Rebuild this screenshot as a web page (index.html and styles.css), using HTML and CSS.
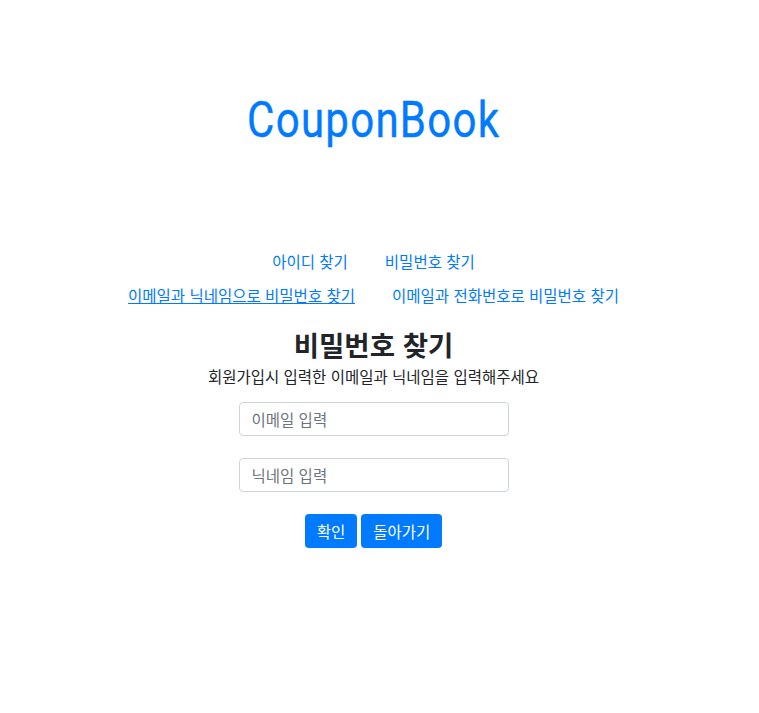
FILE: index.html
```html
<!DOCTYPE html>
<html lang="ko">
<head>
<meta charset="utf-8">
<title>CouponBook</title>
<link rel="stylesheet" href="styles.css">
</head>
<body>
<div class="page">
  <header class="brand">
    <h1 class="logo">CouponBook</h1>
  </header>
  <nav class="tabs">
    <a class="tab" href="#">아이디 찾기</a>
    <a class="tab" href="#">비밀번호 찾기</a>
  </nav>
  <nav class="tabs sub">
    <a class="tab active" href="#">이메일과 닉네임으로 비밀번호 찾기</a>
    <a class="tab" href="#">이메일과 전화번호로 비밀번호 찾기</a>
  </nav>
  <section class="form-area">
    <h2 class="title">비밀번호 찾기</h2>
    <p class="desc">회원가입시 입력한 이메일과 닉네임을 입력해주세요</p>
    <form class="form">
      <input class="field" type="text" placeholder="이메일 입력">
      <input class="field" type="text" placeholder="닉네임 입력">
      <div class="actions">
        <button class="btn" type="button">확인</button>
        <button class="btn" type="button">돌아가기</button>
      </div>
    </form>
  </section>
</div>
</body>
</html>
```
FILE: styles.css
```css
* { box-sizing: border-box; }
body {
  margin: 0;
  background: #fff;
  color: #212529;
  font-family: "Noto Sans CJK KR", "Noto Sans", sans-serif;
  font-size: 15.5px;
}
.page {
  display: flex;
  flex-direction: column;
  align-items: center;
  padding-right: 12px;
}
.brand {
  padding-top: 88px;
  height: 244px;
}
.logo {
  margin: 0;
  font-family: "Roboto", sans-serif;
  font-weight: 400;
  font-size: 50px;
  color: #007bff;
  line-height: 64px;
  letter-spacing: 1.5px;
  -webkit-text-stroke: 0.4px #007bff;
  transform: scaleX(0.84);
}
.tabs {
  display: flex;
  gap: 37px;
  height: 34px;
  align-items: center;
}
.tab {
  color: #007bff;
  text-decoration: none;
  font-size: 15.5px;
}
.tab.active { text-decoration: underline; }
.form-area {
  display: flex;
  flex-direction: column;
  align-items: center;
}
.title {
  margin: 14px 0 0;
  font-size: 27.5px;
  font-weight: 700;
  line-height: 36px;
}
.desc {
  margin: 2px 0 0;
  line-height: 24px;
}
.form {
  display: flex;
  flex-direction: column;
  align-items: center;
  gap: 22px;
  margin-top: 14px;
}
.field {
  width: 270px;
  height: 34px;
  padding: 4px 12px;
  border: 1px solid #ced4da;
  border-radius: 4px;
  font-family: inherit;
  font-size: 15.5px;
  color: #495057;
}
.field::placeholder { color: #6c757d; }
.actions {
  display: flex;
  gap: 4px;
}
.btn {
  height: 34px;
  padding: 0 12px;
  border: 0;
  border-radius: 4px;
  background: #007bff;
  color: #fff;
  font-family: inherit;
  font-size: 15.5px;
}
```
